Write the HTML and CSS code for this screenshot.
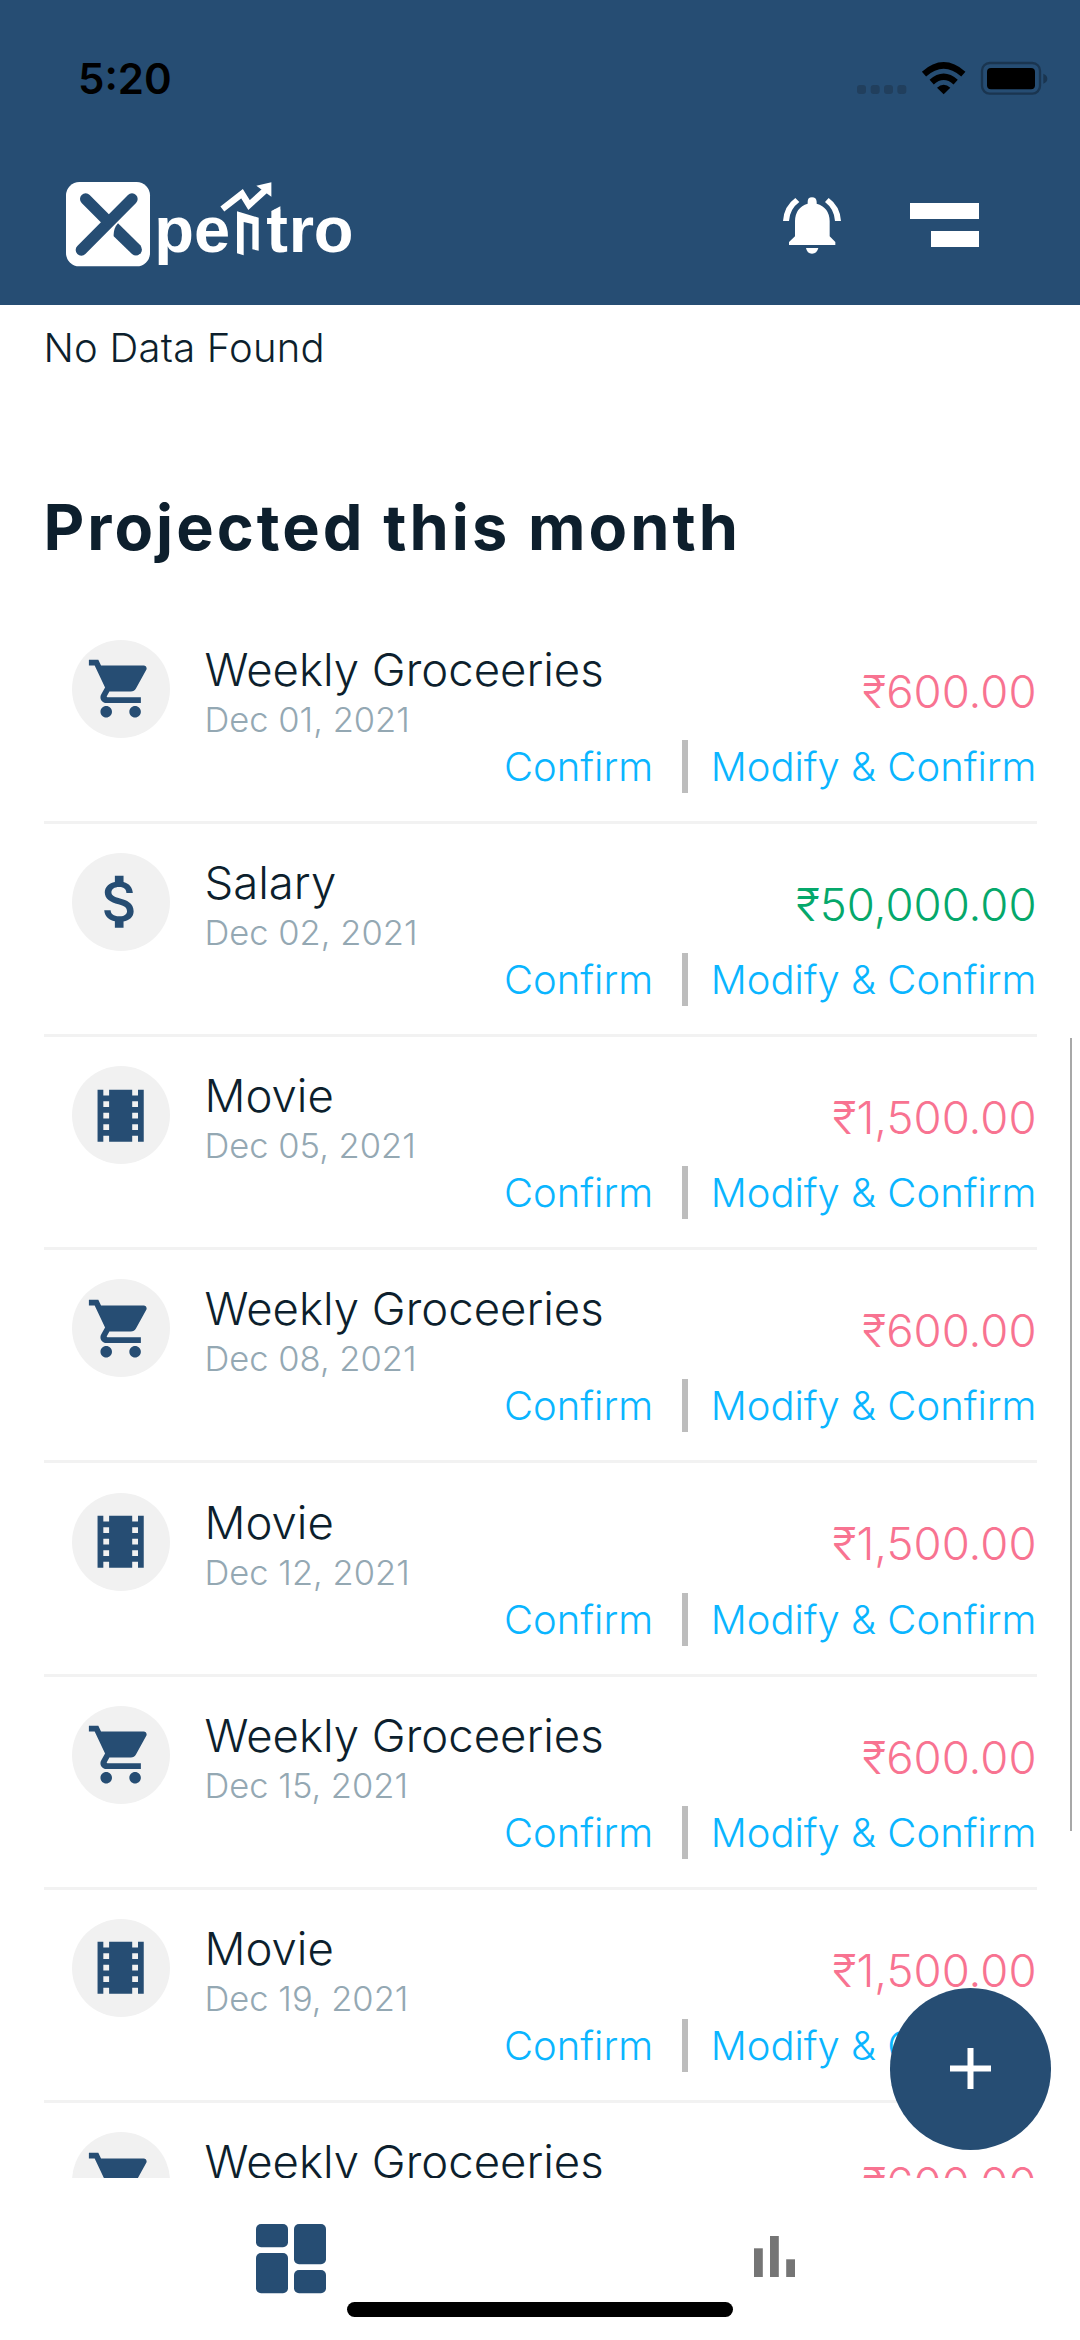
FILE: index.html
```html
<!DOCTYPE html>
<html lang="en">
<head>
<meta charset="utf-8">
<title>Xpentro</title>
<link rel="stylesheet" href="styles.css">
</head>
<body>
<svg class="defs" aria-hidden="true">
  <symbol id="cart" viewBox="0 0 24 24"><path d="M7 18c-1.1 0-1.99.9-1.99 2S5.900 22 7 22s2-.9 2-2-.9-2-2-2zM1 2v2h2l3.600 7.590-1.350 2.450c-.16.28-.25.61-.25.96 0 1.100.9 2 2 2h12v-2H7.420c-.14 0-.25-.11-.25-.25l.03-.12.9-1.630h7.450c.75 0 1.410-.41 1.750-1.030l3.580-6.490c.08-.14.12-.31.12-.48 0-.55-.45-1-1-1H5.210l-.94-2H1zm16 16c-1.100 0-1.990.9-1.990 2s.89 2 1.990 2 2-.9 2-2-.9-2-2-2z"/></symbol>
  <symbol id="dollar" viewBox="0 0 24 24"><path d="M11.800 10.900c-2.270-.59-3-1.200-3-2.150 0-1.090 1.010-1.850 2.700-1.850 1.780 0 2.440.85 2.500 2.100h2.210c-.07-1.720-1.120-3.300-3.210-3.810V3h-3v2.160c-1.940.42-3.500 1.680-3.500 3.610 0 2.310 1.910 3.460 4.700 4.130 2.500.6 3 1.480 3 2.410 0 .69-.49 1.790-2.700 1.790-2.060 0-2.870-.92-2.980-2.100h-2.200c.12 2.190 1.760 3.420 3.680 3.830V21h3v-2.150c1.950-.37 3.500-1.500 3.500-3.550 0-2.840-2.430-3.810-4.700-4.400z"/></symbol>
  <symbol id="film" viewBox="0 0 24 24"><path d="M18 3v2h-2V3H8v2H6V3H4v18h2v-2h2v2h8v-2h2v2h2V3h-2zM8 17H6v-2h2v2zm0-4H6v-2h2v2zm0-4H6V7h2v2zm10 8h-2v-2h2v2zm0-4h-2v-2h2v2zm0-4h-2V7h2v2z"/></symbol>
</svg>

<header class="header">
  <div class="status">
    <span class="clock">5:20</span>
    <svg class="status-icons" viewBox="345 90 585 110">
      <g fill="#213f5d"><rect x="351" y="165" width="27" height="27" rx="9"/><rect x="392" y="165" width="27" height="27" rx="9"/><rect x="432" y="165" width="27" height="27" rx="9"/><rect x="472" y="165" width="27" height="27" rx="9"/></g>
      <g fill="none" stroke="#000" stroke-width="19"><path d="M552 132Q611 80 670 132"/><path d="M575 156Q611 124 647 156"/></g>
      <path d="M591 173Q611 155 631 173L611 193Z"/>
      <rect x="726" y="99" width="174" height="92" rx="23" fill="none" stroke="#1a3550" stroke-width="7"/>
      <rect x="741" y="114" width="144" height="64" rx="12"/>
      <path d="M910 131Q922 136 922 146T910 161Z" fill="#1a3550"/>
    </svg>
  </div>
  <div class="appbar">
    <svg class="logo" viewBox="79 67 860 254">
      <rect x="79" y="67" width="252" height="253" rx="40" fill="#fff"/>
      <g stroke="#264d73" stroke-width="34" stroke-linecap="round"><path d="M277 118L125 271"/><path d="M138 118L203 183"/></g>
      <path d="M235 191L302 257Q311 270 303 281Q290 293 277 283L222 230Q221 206 235 191Z" fill="#264d73"/>
      <g class="wordmark" fill="#fff"><text x="344" y="276.500">pe</text><text x="680" y="276.500">t</text><text x="747" y="276.500">r</text><text x="822" y="276.500">o</text></g>
      <g fill="#fff">
        <path d="M695 154L722 140V180H695Z"/>
        <path d="M592 155L657 174V273L638 269V193L612 187V287L592 281Z"/>
        <path d="M650 78L695 68V111Z"/>
      </g>
      <path d="M548 148L607 102L628 136L680 89" fill="none" stroke="#fff" stroke-width="19"/>
    </svg>
    <svg class="bell" viewBox="129 501 174 171" fill="#fff">
      <path d="M203 521V515Q203 502 216 502T230 515V521Q268 532 269 573V619L286 636V645H147V636L165 619V573Q166 532 203 521Z"/>
      <path d="M198 654H235Q231 671 216 671T198 654Z"/>
      <path d="M129 573Q132 528 166 504L178 516Q149 537 147 573Z"/>
      <path d="M303 573Q300 528 266 504L255 516Q283 537 285 573Z"/>
    </svg>
    <div class="menu"><i></i><i></i></div>
  </div>
</header>

<main class="content">
  <p class="empty">No Data Found</p>
  <h1 class="heading">Projected this month</h1>
  <ul class="list" id="list"></ul>
  <div class="scrollbar"></div>
</main>

<nav class="tabs">
  <svg class="tab-dashboard" viewBox="0 0 70 69.500" fill="#264d73"><rect width="32" height="23.300" rx="5"/><rect y="29" width="32" height="40.300" rx="5"/><rect x="38" width="32" height="40.300" rx="5"/><rect x="38" y="46" width="32" height="23.300" rx="5"/></svg>
  <svg class="tab-stats" viewBox="0 0 41 41" fill="#757575"><rect y="12.300" width="8.800" height="28.700"/><rect x="16" width="8.800" height="41"/><rect x="32.200" y="23.300" width="8.800" height="17.700"/></svg>
</nav>
<div class="home-indicator"></div>
<button class="fab" aria-label="Add"><svg viewBox="0 0 41 41" fill="#fff"><path d="M17.500 0h6v17.500H41v6H23.500V41h-6V23.500H0v-6h17.500z"/></svg></button>
<script src="app.js"></script>
</body>
</html>
```
FILE: app.js
```js
const entries = [
  ["cart", "Weekly Groceeries", "Dec 01, 2021", "₹600.00"],
  ["dollar", "Salary", "Dec 02, 2021", "₹50,000.00", "income"],
  ["film", "Movie", "Dec 05, 2021", "₹1,500.00"],
  ["cart", "Weekly Groceeries", "Dec 08, 2021", "₹600.00"],
  ["film", "Movie", "Dec 12, 2021", "₹1,500.00"],
  ["cart", "Weekly Groceeries", "Dec 15, 2021", "₹600.00"],
  ["film", "Movie", "Dec 19, 2021", "₹1,500.00"],
  ["cart", "Weekly Groceeries", "Dec 22, 2021", "₹600.00"]
];
document.getElementById("list").innerHTML = entries.map(([icon, title, date, amount, kind = "expense"]) => `
  <li class="entry">
    <div class="summary">
      <span class="badge"><svg><use href="#${icon}"/></svg></span>
      <div class="info"><div class="title">${title}</div><div class="date">${date}</div></div>
      <div class="amount ${kind}">${amount}</div>
    </div>
    <div class="actions"><a>Confirm</a><span class="divider"></span><a>Modify &amp; Confirm</a></div>
  </li>`).join("");
```
FILE: styles.css
```css
* { box-sizing: border-box; }
body {
  margin: 0;
  width: 1080px;
  height: 2340px;
  display: flex;
  flex-direction: column;
  overflow: hidden;
  position: relative;
  background: #fff;
  color: #0d1f2d;
  font-family: Inter, "Liberation Sans", sans-serif;
}
svg { display: block; flex: none; }
.defs { position: absolute; width: 0; height: 0; }

.header { flex: none; height: 305.3px; background: #264d73; }
.status {
  height: 158px;
  padding: 54px 30px 0 78px;
  display: flex;
  justify-content: space-between;
  align-items: flex-start;
}
.clock { font-size: 42px; line-height: 50px; font-weight: 600; color: #000; }
.status-icons { width: 195px; height: 36.7px; margin-top: 6px; }
.appbar { display: flex; align-items: flex-start; padding: 0 100.7px 0 66.3px; }
.logo { width: 286.7px; height: 84.7px; margin-top: 24.3px; }
.wordmark { font: 700 195px "Liberation Sans", Arial, sans-serif; }
.bell { width: 58px; height: 57px; margin: 39px 0 0 auto; }
.menu {
  margin: 44.5px 0 0 69px;
  display: flex;
  flex-direction: column;
  align-items: flex-end;
  gap: 11.5px;
}
.menu i { width: 69.3px; height: 16.5px; background: #fff; }
.menu i + i { width: 48.8px; }

.content {
  flex: none;
  height: 1872.7px;
  padding: 18px 43.5px 0;
  overflow: hidden;
  position: relative;
}
.empty { margin: 0; font-size: 40px; line-height: 50px; font-weight: 300; letter-spacing: .23px; }
.heading { margin: 116px 0 45.4px; font-size: 63px; line-height: 76px; font-weight: 700; letter-spacing: 3px; }
.list { margin: 0; padding: 0; list-style: none; }
.entry { height: 213.2px; border-bottom: 3px solid #f2f2f2; }
.summary { height: 129.2px; padding-left: 28.5px; display: flex; align-items: flex-start; }
.badge {
  width: 98px;
  height: 98px;
  margin-top: 29.2px;
  border-radius: 50%;
  background: #f1f1f1;
  display: flex;
  align-items: center;
  justify-content: center;
}
.badge svg { width: 69.3px; height: 69.3px; fill: #264d73; }
.info { margin: 31.1px 0 0 34.5px; font-weight: 300; }
.title { font-size: 45.5px; line-height: 55px; }
.date { font-size: 34.5px; line-height: 45.1px; color: #94a8b3; }
.amount { margin: 56px 0 0 auto; font-size: 45.5px; line-height: 50px; font-weight: 300; }
.expense { color: #f87391; }
.income { color: #05a86b; }
.actions {
  height: 53px;
  display: flex;
  justify-content: flex-end;
  font-size: 40px;
  line-height: 53px;
  font-weight: 300;
  color: #0ab5ff;
}
.divider { width: 6px; margin: 0 23px 0 28.600px; background: #bdbdbd; }
.scrollbar {
  position: absolute;
  right: 8px;
  top: 733px;
  width: 2px;
  height: 793px;
  background: #a8a8a8;
}

.tabs { flex: none; height: 124px; padding: 46.5px 285px 0 256px; display: flex; justify-content: space-between; }
.tab-dashboard { width: 70px; height: 69.5px; }
.tab-stats { width: 41px; height: 41px; margin-top: 11.5px; }
.home-indicator { width: 386.5px; height: 15px; margin: 0 auto; border-radius: 8px; background: #000; }
.fab {
  position: absolute;
  left: 889.8px;
  top: 1988px;
  width: 161.5px;
  height: 161.5px;
  padding: 0;
  border: 0;
  border-radius: 50%;
  background: #264d73;
  display: flex;
  align-items: center;
  justify-content: center;
}
.fab svg { width: 41px; height: 41px; }
```
